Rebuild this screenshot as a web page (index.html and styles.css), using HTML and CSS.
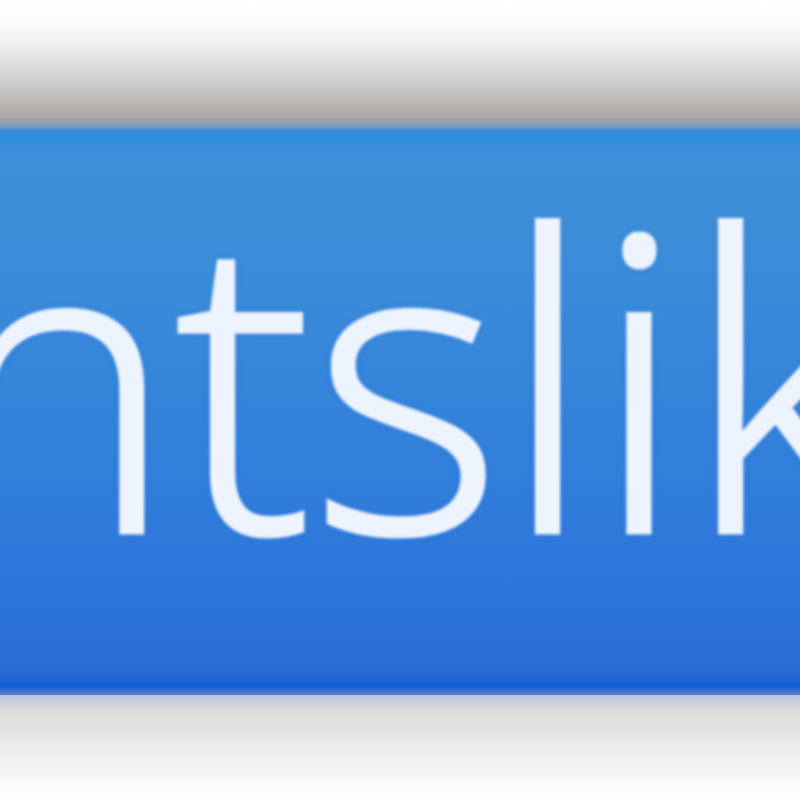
FILE: index.html
```html
<!DOCTYPE html>
<html>
<head>
<meta charset="utf-8">
<link rel="stylesheet" href="styles.css">
</head>
<body>
<div class="page">
  <div class="top"></div>
  <div class="bar"><span class="word">ntslik</span></div>
  <div class="bottom"></div>
</div>
</body>
</html>
```
FILE: styles.css
```css
html, body {
  margin: 0;
  padding: 0;
  background: #fff;
}
.page {
  width: 800px;
  height: 800px;
  overflow: hidden;
  display: flex;
  flex-direction: column;
}
.top {
  height: 130px;
  flex: none;
  background: linear-gradient(to bottom,
    #ffffff 0px, #fdfdfd 15px, #f3f3f3 40px, #dedede 65px,
    #c6c6c6 90px, #b4b0ab 110px, #a9a7a5 118px, #7f9bbf 126px, #4a8cd3 130px);
}
.bar {
  height: 565px;
  flex: none;
  box-sizing: border-box;
  padding-top: 38px;
  display: flex;
  white-space: nowrap;
  overflow: hidden;
  background: linear-gradient(to bottom,
    #338ddd 0px, #318ddd 10px, #3d8fd7 22px, #3c8ed8 100px,
    #3585da 250px, #2f7adb 400px, #2b71d8 500px, #2a6bd6 540px,
    #1160d8 556px, #5a7fc6 565px);
}
.word {
  font-family: "Open Sans", "Liberation Sans", sans-serif;
  font-weight: 300;
  font-size: 410px;
  line-height: 1;
  height: 410px;
  color: #eef4fd;
  -webkit-text-stroke: 5px #eef4fd;
  margin-left: -66px;
  letter-spacing: -1px;
  text-shadow: 0 0 6px #1762d4;
  filter: blur(1.4px);
}
.bottom {
  height: 105px;
  flex: none;
  background: linear-gradient(to bottom,
    #b8c4dc 0px, #e2dfd8 18px, #e3e3e3 35px, #e8e8ea 45px,
    #f3f3f3 70px, #fafafa 90px, #ffffff 105px);
}
```
